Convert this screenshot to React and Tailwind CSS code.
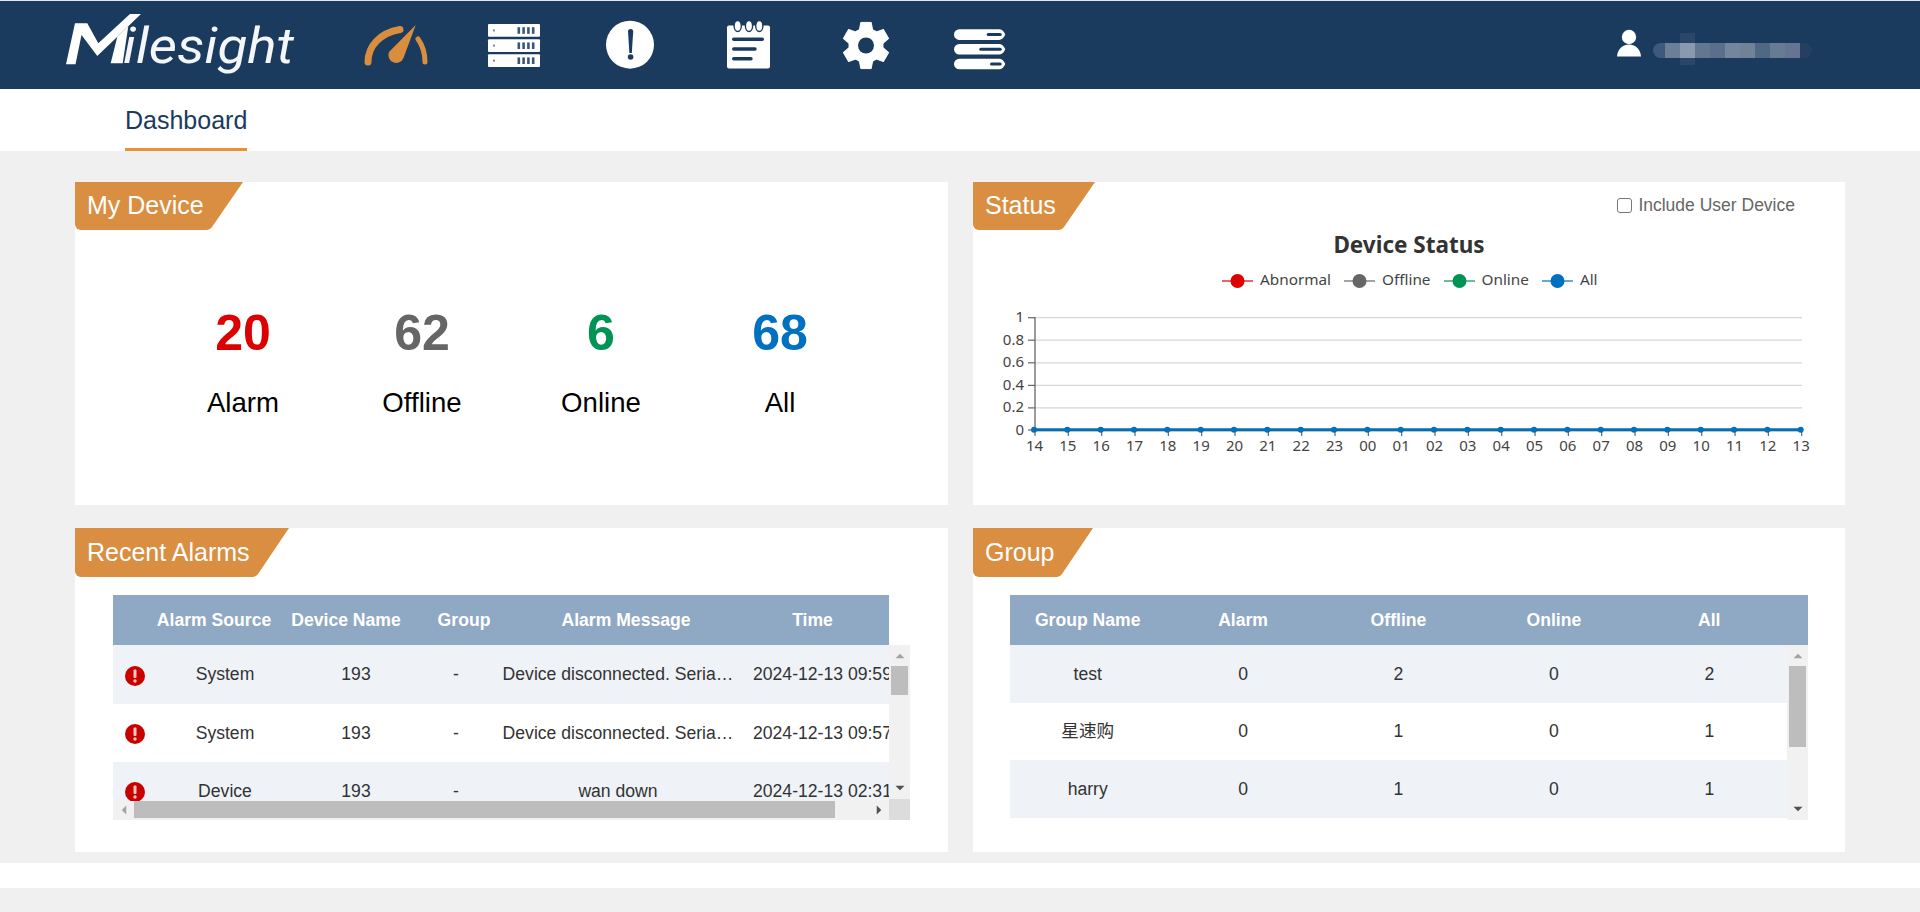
const NAVY = "#1a3a5e";

function Logo() {
  return (
    <svg width="338" height="88" viewBox="0 1 338 88" className="shrink-0">
      <polygon fill="#fff" points="66,64.3 75,23.3 87.3,23.3 98.3,43.3 130,14 141,14 97.3,56 81.5,35 75.5,64.3" />
      <polygon fill="#fff" points="110.7,63.3 117.3,36.7 128.3,26.3 122.7,63.3" />
      <text x="123" y="63.3" textLength="171" lengthAdjust="spacingAndGlyphs" fontSize="50" fontStyle="italic" fontWeight="400" className="fill-[#f4f6f9] font-['Roboto',sans-serif]">ilesight</text>
    </svg>
  );
}

function NavIcon({ x, children }) {
  return (
    <svg width="117" height="88" viewBox={`${x} 1 117 88`} className="shrink-0">
      {children}
    </svg>
  );
}

function ServerRow({ y }) {
  return (
    <g>
      <rect x="488" y={y} width="52" height="12.8" rx="1" fill="#fff" />
      <rect x="493" y={y + 5.4} width="2" height="2" fill={NAVY} opacity="0.6" />
      {[517.5, 522.3, 527.1, 531.9].map((b) => (
        <rect key={b} x={b} y={y + 3.2} width="2.6" height="6.6" fill={NAVY} opacity="0.85" />
      ))}
    </g>
  );
}

function Gear() {
  const teeth = [0, 60, 120, 180, 240, 300];
  return (
    <g>
      <circle cx="866" cy="45.5" r="17.5" fill="#fff" />
      {teeth.map((a) => (
        <polygon key={a} fill="#fff" points="859,32 860.8,22.4 871.2,22.4 873,32" transform={`rotate(${a} 866 45.5)`} strokeLinejoin="round" stroke="#fff" strokeWidth="1" />
      ))}
      <circle cx="866" cy="45.5" r="8" fill={NAVY} />
    </g>
  );
}

function Pill({ y, slot }) {
  return (
    <g>
      <path d={`M959.3 ${y}H999Q1003 ${y} 1005.3 ${y + 5.3}Q1003 ${y + 10.6} 999 ${y + 10.6}H959.3A5.3 5.3 0 0 1 959.3 ${y}Z`} fill="#fff" />
      <rect x={slot} y={y + 3.8} width={1001.7 - slot} height="3" rx="1.5" fill={NAVY} />
    </g>
  );
}

function Header() {
  return (
    <header className="flex h-[88px] items-center bg-[#1a3a5e] pr-[108px]">
      <Logo />
      <NavIcon x={338}>
        <path d="M368 62C368 46 380 33 400 29.5" fill="none" stroke="#d98e3f" strokeWidth="7" strokeLinecap="round" />
        <path d="M418 39C423 46 425 54 425 62" fill="none" stroke="#d98e3f" strokeWidth="5" strokeLinecap="round" />
        <path d="M415.7 25L403.5 58A7.8 7.8 0 1 1 389 52Z" fill="#d98e3f" />
      </NavIcon>
      <NavIcon x={455}>
        <ServerRow y={24} />
        <ServerRow y={39.2} />
        <ServerRow y={54.2} />
      </NavIcon>
      <NavIcon x={572}>
        <circle cx="630" cy="44.7" r="24" fill="#fff" />
        <path d="M628 31.5A2.6 2.6 0 0 1 633.2 31.5L631.8 53H629.4Z" fill={NAVY} />
        <circle cx="630.6" cy="57" r="2.8" fill={NAVY} />
      </NavIcon>
      <NavIcon x={689}>
        <rect x="727" y="25.5" width="43" height="43" rx="2" fill="#fff" />
        {[737.7, 749, 759.3].map((c) => (
          <ellipse key={c} cx={c} cy="26" rx="3.6" ry="5.5" fill="#fff" stroke={NAVY} strokeWidth="1.4" />
        ))}
        <rect x="732" y="37.6" width="32" height="3.4" rx="1.7" fill={NAVY} />
        <rect x="732" y="47.3" width="24.7" height="3.4" rx="1.7" fill={NAVY} />
        <rect x="732" y="57" width="20.7" height="3.4" rx="1.7" fill={NAVY} />
      </NavIcon>
      <NavIcon x={806}>
        <Gear />
      </NavIcon>
      <NavIcon x={923}>
        <Pill y={29.3} slot={986.7} />
        <Pill y={44} slot={979.3} />
        <Pill y={58.7} slot={990} />
      </NavIcon>
      <div className="ml-auto flex items-center">
        <svg width="24" height="28" viewBox="0 0 24 28" className="mr-[12px] -mt-[4px]">
          <circle cx="12" cy="8" r="7.2" fill="#fff" />
          <path d="M0 27.5C0.5 20.5 5 15.5 12 15.5C19 15.5 23.5 20.5 24 27.5Z" fill="#fff" />
        </svg>
        <div className="relative mt-[10px] flex h-[15px]">
          <div className="absolute left-[27px] top-[-10px] h-[32px] w-[15px] bg-[#2a4769]" />
          <div className="relative h-full w-[12px] rounded-l-[8px] bg-[#3d5a7c]" />
          <div className="relative h-full w-[15px] bg-[#6b7f97]" />
          <div className="relative h-full w-[15px] bg-[#8a99ad]" />
          <div className="relative h-full w-[15px] bg-[#61788f]" />
          <div className="relative h-full w-[15px] bg-[#596f8c]" />
          <div className="relative h-full w-[15px] bg-[#74869d]" />
          <div className="relative h-full w-[15px] bg-[#6f8296]" />
          <div className="relative h-full w-[15px] bg-[#4f6884]" />
          <div className="relative h-full w-[15px] bg-[#667c93]" />
          <div className="relative h-full w-[15px] bg-[#667493]" />
          <div className="relative h-full w-[12px] rounded-r-[8px] bg-[#253f60]" />
        </div>
      </div>
    </header>
  );
}

function Badge({ width, height, children }) {
  return (
    <div className={`flex shrink-0 items-center rounded-bl-[6px] bg-[#d98e41] pl-[12px] text-[25px] text-white [clip-path:polygon(0_0,100%_0,calc(100%_-_31px)_calc(100%_-_3px),calc(100%_-_33px)_calc(100%_-_1px),calc(100%_-_36px)_100%,0_100%)] ${width} ${height}`}>
      {children}
    </div>
  );
}

function Stat({ value, label, color }) {
  return (
    <div className="flex w-[179px] flex-col items-center">
      <div className={`h-[60px] text-[50px] leading-[60px] font-bold ${color}`}>{value}</div>
      <div className="mt-[25px] h-[30px] text-[27.6px] leading-[30px] text-black">{label}</div>
    </div>
  );
}

function MyDevice() {
  return (
    <section className="flex h-[323px] flex-col bg-white">
      <Badge width="w-[168px]" height="h-12">My Device</Badge>
      <div className="mt-[73px] flex justify-center">
        <Stat value="20" label="Alarm" color="text-[#dc0000]" />
        <Stat value="62" label="Offline" color="text-[#666666]" />
        <Stat value="6" label="Online" color="text-[#009454]" />
        <Stat value="68" label="All" color="text-[#0070c0]" />
      </div>
    </section>
  );
}

function LegendItem({ stroke, label, textClass }) {
  return (
    <div className="flex items-center gap-[7px]">
      <svg width="31" height="16" viewBox="0 0 31 16" className="mt-[4px]">
        <line x1="0" y1="8" x2="31" y2="8" stroke={stroke} strokeWidth="1.2" />
        <circle cx="15.5" cy="8" r="7" fill={stroke} />
      </svg>
      <span className={textClass}>{label}</span>
    </div>
  );
}

function Chart() {
  const xs = ["14","15","16","17","18","19","20","21","22","23","00","01","02","03","04","05","06","07","08","09","10","11","12","13"];
  const left = 1035;
  const step = (1801.7 - 1035) / 23;
  const ys = [["1", 317.7], ["0.8", 340.2], ["0.6", 362.8], ["0.4", 385.4], ["0.2", 407.9], ["0", 430]];
  return (
    <svg width="872" height="160" viewBox="973 305 872 160" className="mt-[15px] block font-['Noto_Sans',sans-serif]">
      {ys.slice(0, 5).map(([, y]) => (
        <line key={y} x1={left} x2="1802" y1={y} y2={y} stroke="#d6d6d6" strokeWidth="1.3" />
      ))}
      <line x1={left} x2={left} y1="317" y2="431" stroke="#666" strokeWidth="1.3" />
      <line x1={left} x2="1802" y1="431" y2="431" stroke="#888" strokeWidth="1" />
      {ys.map(([t, y]) => (
        <g key={t}>
          <line x1="1028" x2={left} y1={y} y2={y} stroke="#666" strokeWidth="1.2" />
          <text x="1024" y={y + 4.5} textAnchor="end" fontSize="15" className="fill-[#444]">{t}</text>
        </g>
      ))}
      {xs.map((t, i) => (
        <g key={i}>
          <line x1={left + i * step} x2={left + i * step} y1="430" y2="436" stroke="#666" strokeWidth="1.2" />
          <text x={left + i * step - 0.5} y="450.5" textAnchor="middle" fontSize="15" className="fill-[#444]">{t}</text>
        </g>
      ))}
      <line x1={left - 1} x2="1802" y1="429.7" y2="429.7" stroke="#0070b8" strokeWidth="2.8" />
      {xs.map((t, i) => (
        <circle key={i} cx={left - 1 + i * step} cy="429.7" r="3" fill="#0070b8" />
      ))}
    </svg>
  );
}

function Status() {
  const legendText = "text-[15.3px] leading-[20px] text-[#444] font-['Noto_Sans',sans-serif]";
  return (
    <section className="flex h-[323px] flex-col bg-white">
      <div className="flex h-12 justify-between">
        <Badge width="w-[122px]" height="h-12">Status</Badge>
        <label className="mt-[12px] mr-[50px] flex h-[22px] items-center gap-[6px] text-[17.5px] text-[#666]">
          <span className="box-border block h-[15px] w-[15px] rounded-[3px] border border-[#767676] bg-white" />
          Include User Device
        </label>
      </div>
      <div className="h-[30px] text-center text-[22.5px] leading-[30px] font-bold text-[#333] font-['Noto_Sans',sans-serif]">Device Status</div>
      <div className="mt-[9px] mb-[1px] ml-[249px] flex h-[20px] items-center gap-[13px]">
        <LegendItem stroke="#dc0000" label="Abnormal" textClass={legendText} />
        <LegendItem stroke="#666666" label="Offline" textClass={legendText} />
        <LegendItem stroke="#009454" label="Online" textClass={legendText} />
        <LegendItem stroke="#0070c0" label="All" textClass={legendText} />
      </div>
      <Chart />
    </section>
  );
}

function AlarmIcon() {
  return (
    <svg width="20" height="20" viewBox="0 0 20 20" className="mt-[2px] ml-[12px]">
      <circle cx="10" cy="10" r="10" fill="#c90000" />
      <rect x="8.5" y="3.6" width="3" height="8.4" rx="1" fill="#f4c6c6" />
      <circle cx="10" cy="15" r="1.7" fill="#f4c6c6" />
    </svg>
  );
}

const alarms = [
  { source: "System", msg: "Device disconnected. Seria…", time: "2024-12-13 09:59", row: "h-[59px] bg-[#eff2f7]" },
  { source: "System", msg: "Device disconnected. Seria…", time: "2024-12-13 09:57", row: "h-[58px] bg-white" },
  { source: "Device", msg: "wan down", time: "2024-12-13 02:31", row: "h-[58px] bg-[#eff2f7]" },
];

function Arrow({ dir, dark }) {
  const pts = {
    up: "0,7 6,1 12,7",
    down: "0,1 12,1 6,7",
    left: "7,0 1,6 7,12",
    right: "1,0 7,6 1,12",
  }[dir];
  const vertical = dir === "up" || dir === "down";
  return (
    <svg width={vertical ? 10 : 6} height={vertical ? 6 : 10} viewBox={vertical ? "0 0 12 8" : "0 0 8 12"}>
      <polygon points={pts} fill={dark ? "#505050" : "#a3a3a3"} />
    </svg>
  );
}

function VScroll({ thumb, corner }) {
  return (
    <div className="flex w-[21px] shrink-0 flex-col bg-[#f1f1f1]">
      <div className="flex h-[21px] items-center justify-center"><Arrow dir="up" /></div>
      <div className={`mx-auto w-[17px] bg-[#bdbdbd] ${thumb}`} />
      <div className="flex-1" />
      <div className="flex h-[21px] items-center justify-center pb-[2px]"><Arrow dir="down" dark /></div>
      {corner && <div className="h-[21px] bg-[#dcdcdc]" />}
    </div>
  );
}

function RecentAlarms() {
  return (
    <section className="flex h-[324px] flex-col bg-white">
      <Badge width="w-[214px]" height="h-[49px]">Recent Alarms</Badge>
      <div className="mt-[18px] ml-[38px] w-[797px]">
        <div className="grid h-[50px] w-[776px] grid-cols-[35px_132px_132px_104px_220px_153px] items-center bg-[#8fa8c3] text-center text-[17.6px] font-bold text-white">
          <div />
          <div className="whitespace-nowrap">Alarm Source</div>
          <div className="whitespace-nowrap">Device Name</div>
          <div>Group</div>
          <div className="whitespace-nowrap">Alarm Message</div>
          <div>Time</div>
        </div>
        <div className="flex h-[175px]">
          <div className="flex w-[776px] flex-col">
            <div className="h-[156px] overflow-hidden">
              {alarms.map((a, i) => (
                <div key={i} className={`grid grid-cols-[47px_130px_132px_68px_256px_143px] items-center text-center text-[17.6px] text-[#333] ${a.row}`}>
                  <AlarmIcon />
                  <div>{a.source}</div>
                  <div>193</div>
                  <div>-</div>
                  <div className="whitespace-nowrap">{a.msg}</div>
                  <div className="overflow-hidden pl-[7px] text-left whitespace-nowrap">{a.time}</div>
                </div>
              ))}
            </div>
            <div className="flex h-[19px] bg-[#f1f1f1]">
              <div className="flex w-[21px] items-center justify-center pb-[2px]"><Arrow dir="left" /></div>
              <div className="h-[17px] w-[701px] bg-[#bdbdbd]" />
              <div className="flex-1" />
              <div className="flex w-[21px] items-center justify-center pb-[2px]"><Arrow dir="right" dark /></div>
            </div>
          </div>
          <VScroll thumb="h-[29px]" corner />
        </div>
      </div>
    </section>
  );
}

const groups = [
  { name: "test", a: 0, off: 2, on: 0, all: 2, row: "h-[58px] bg-[#eff2f7]" },
  { name: "星速购", a: 0, off: 1, on: 0, all: 1, row: "h-[57px] bg-white" },
  { name: "harry", a: 0, off: 1, on: 0, all: 1, row: "h-[58px] bg-[#eff2f7] pt-[1px]" },
];

function Group() {
  return (
    <section className="flex h-[324px] flex-col bg-white">
      <Badge width="w-[120px]" height="h-[49px]">Group</Badge>
      <div className="mt-[18px] ml-[37px] w-[798px]">
        <div className="grid h-[50px] grid-cols-[155.4px_155.4px_155.4px_155.4px_155.4px_21px] items-center bg-[#8fa8c3] text-center text-[17.6px] font-bold text-white">
          <div>Group Name</div>
          <div>Alarm</div>
          <div>Offline</div>
          <div>Online</div>
          <div>All</div>
          <div />
        </div>
        <div className="flex h-[175px]">
          <div className="w-[777px]">
            {groups.map((g) => (
              <div key={g.name} className={`grid grid-cols-5 items-center text-center text-[17.6px] text-[#333] ${g.row}`}>
                <div>{g.name}</div>
                <div>{g.a}</div>
                <div>{g.off}</div>
                <div>{g.on}</div>
                <div>{g.all}</div>
              </div>
            ))}
          </div>
          <VScroll thumb="h-[81px]" />
        </div>
      </div>
    </section>
  );
}

export default function App() {
  return (
    <div className="flex h-[912px] flex-col overflow-hidden bg-[#f0f0f0] font-['Liberation_Sans','Noto_Sans_CJK_SC',sans-serif]">
      <div className="h-px bg-[#e6e6e6]" />
      <Header />
      <nav className="flex h-[62px] bg-white pl-[125px]">
        <div className="h-full w-[122px] border-b-[3px] border-[#e89139] pt-[16px] text-[25px] leading-[30px] text-[#1a3a5e]">Dashboard</div>
      </nav>
      <main className="grid grid-cols-[873px_872px] gap-x-[25px] gap-y-[23px] px-[75px] pt-[31px]">
        <MyDevice />
        <Status />
        <RecentAlarms />
        <Group />
      </main>
      <div className="mt-[11px] h-[25px] bg-white" />
    </div>
  );
}
